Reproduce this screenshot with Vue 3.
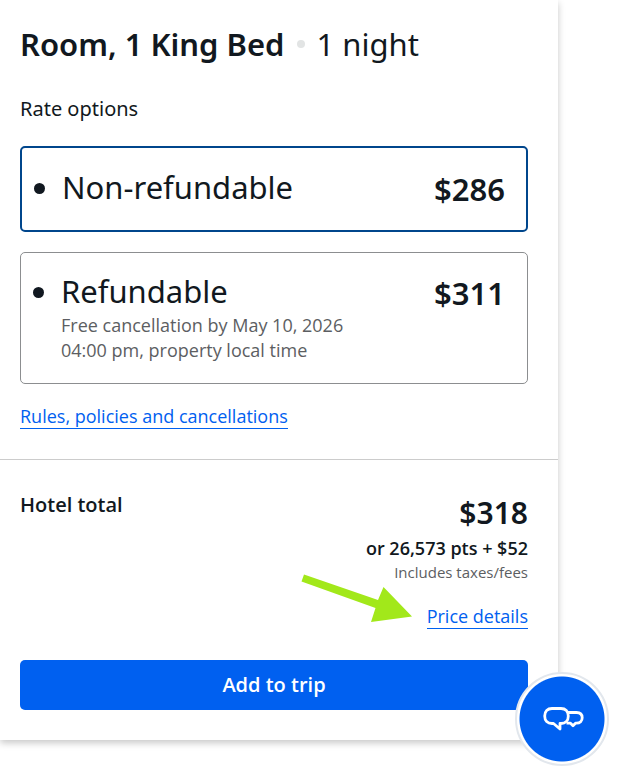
<script setup>
import { ref } from 'vue'

const rates = [
  { id: 'non-refundable', name: 'Non-refundable', price: '$286', notes: [] },
  {
    id: 'refundable',
    name: 'Refundable',
    price: '$311',
    notes: ['Free cancellation by May 10, 2026', '04:00 pm, property local time'],
  },
]
const selected = ref('non-refundable')
</script>

<template>
  <main class="page">
    <section class="card">
      <div class="room">
        <h1 class="title">
          <strong>Room, 1 King Bed</strong>
          <span class="separator"></span>
          <span>1 night</span>
        </h1>
        <fieldset class="rates">
          <legend class="legend">Rate options</legend>
          <label
            v-for="rate in rates"
            :key="rate.id"
            class="rate"
            :class="{ selected: selected === rate.id }"
            :for="rate.id"
          >
            <input :id="rate.id" v-model="selected" class="dot" type="radio" name="rate" :value="rate.id" />
            <span class="description">
              <span class="name">{{ rate.name }}</span>
              <span v-for="note in rate.notes" :key="note" class="note">{{ note }}</span>
            </span>
            <strong class="price">{{ rate.price }}</strong>
          </label>
        </fieldset>
        <a class="link" href="#rules">Rules, policies and cancellations</a>
      </div>

      <div class="summary">
        <div class="total">
          <h2 class="total-label">Hotel total</h2>
          <div class="amounts">
            <strong class="amount">$318</strong>
            <strong class="points">or 26,573 pts + $52</strong>
            <span class="taxes">Includes taxes/fees</span>
            <div class="details">
              <a class="link" href="#price">Price details</a>
              <svg class="arrow" width="112" height="50" viewBox="0 0 112 50" aria-hidden="true">
                <path d="M3 0.500L77 26L82.500 13L111 42.500L70 48L74.500 34L0.500 7.500Z" fill="#a2e81a" />
              </svg>
            </div>
          </div>
        </div>
        <button class="add" type="button">Add to trip</button>
      </div>
    </section>

    <button class="chat" type="button" aria-label="Chat">
      <svg width="42" height="26" viewBox="0 0 42 26" fill="none" stroke="#fff" stroke-width="2.800" stroke-linejoin="round" aria-hidden="true">
        <path d="M10 2.500H19C23.500 2.500 26.300 5.500 26.300 10C26.300 14.500 23.500 17.500 19 17.500H18V23L11.500 17.500H10C5.500 17.500 2.700 14.500 2.700 10C2.700 5.500 5.500 2.500 10 2.500Z" />
        <path d="M26 6.500H34.500C38 6.500 40.200 8.500 40.200 11.800C40.200 15 38 17.200 34.500 17.200H33.500L31 19.700L28.500 17.200H24.500" />
      </svg>
    </button>
  </main>
</template>

<style>
body {
  margin: 0;
  background: #fff;
}
</style>

<style scoped>
* {
  box-sizing: border-box;
}

.page {
  min-height: 100vh;
  padding-right: 69px;
  overflow: hidden;
  color: #111820;
  font-family: "Open Sans", "Noto Sans", sans-serif;
}

.card {
  background: #fff;
  box-shadow: 0 3px 7px rgba(0, 0, 0, 0.22);
}

.room {
  padding: 24px 30px 30px 20px;
  border-bottom: 1px solid #ccc;
}

.title {
  display: flex;
  align-items: center;
  margin: 0 0 30px;
  font-family: "Noto Sans", "Open Sans", sans-serif;
  font-size: 31px;
  font-weight: 400;
  line-height: 40px;
}

strong {
  font-weight: 600;
}

.separator {
  width: 8px;
  height: 8px;
  margin: 0 12px;
  border-radius: 50%;
  background: #e2e4e4;
}

.rates {
  display: grid;
  gap: 20px;
  min-width: 0;
  margin: 0 0 20px;
  padding: 0;
  border: 0;
}

.legend {
  margin-bottom: 22px;
  padding: 0;
  font-family: "Noto Sans", "Open Sans", sans-serif;
  font-size: 20px;
  line-height: 30px;
}

.rate {
  display: flex;
  align-items: flex-start;
  padding: 20px 22px 20px 12px;
  border: 1px solid #8c8e90;
  border-radius: 5px;
  cursor: pointer;
}

.rate.selected {
  padding: 21px 21px 21px 12px;
  border: 2px solid #00468c;
}

.dot {
  flex: none;
  width: 11px;
  height: 11px;
  margin: 14px 17px 0 0;
  border-radius: 50%;
  background: #111820;
  appearance: none;
}

.description {
  flex: 1;
}

.name,
.note {
  display: block;
}

.name {
  margin-bottom: 4px;
  font-family: "Noto Sans", "Open Sans", sans-serif;
  font-size: 31px;
  line-height: 36px;
}

.note {
  color: #5c5e62;
  font-size: 18px;
  line-height: 25px;
}

.price {
  font-family: "Noto Sans", "Open Sans", sans-serif;
  font-size: 31px;
  line-height: 40px;
}

.link {
  display: inline-block;
  border-bottom: 1px solid #0060f0;
  color: #0060f0;
  font-size: 18px;
  line-height: 24px;
  text-decoration: none;
}

.summary {
  padding: 30px 30px 30px 20px;
}

.total {
  display: flex;
  justify-content: space-between;
  margin-bottom: 31px;
}

.total-label {
  margin: 0;
  font-size: 20px;
  font-weight: 600;
  line-height: 30px;
}

.amounts {
  display: flex;
  flex-direction: column;
  align-items: flex-end;
}

.amount {
  margin-top: 3px;
  font-family: "Noto Sans", "Open Sans", sans-serif;
  font-size: 30px;
  line-height: 40px;
}

.points {
  margin-top: 2px;
  font-size: 18px;
  line-height: 26px;
}

.taxes {
  color: #5c5e62;
  font-size: 15px;
  line-height: 22px;
}

.details {
  position: relative;
  margin-top: 21px;
}

.arrow {
  position: absolute;
  right: 115px;
  bottom: 5px;
}

.add {
  display: block;
  width: 100%;
  height: 50px;
  border: 0;
  border-radius: 5px;
  background: #0060f0;
  color: #fff;
  font: 600 20px/30px "Open Sans", "Noto Sans", sans-serif;
  cursor: pointer;
}

.chat {
  position: fixed;
  right: 18px;
  bottom: 4px;
  display: grid;
  place-items: center;
  width: 94px;
  height: 94px;
  padding: 0 0 0 2px;
  border: 2px solid #e2e7ed;
  border-radius: 50%;
  background: radial-gradient(circle closest-side, #0060f0 42px, #fff 43px);
  cursor: pointer;
}
</style>
